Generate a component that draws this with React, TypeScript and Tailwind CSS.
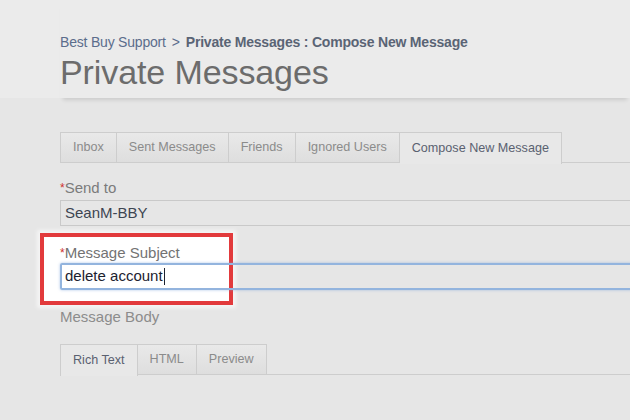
import React from "react";

const font = { fontFamily: '"Liberation Sans", Arial, Helvetica, sans-serif' };

function Tab({ label, active, first }: { label: string; active?: boolean; first?: boolean }) {
  return (
    <div
      className={
        "h-[31px] px-3 flex items-center text-[12.6px] border-t border-r border-[#cdcdcd] " +
        (first ? "border-l " : "") +
        (active
          ? "bg-[#e8e8e8] text-[#5a6170] h-[32px] -mb-px"
          : "bg-gradient-to-b from-[#e9e9e9] to-[#dedede] text-[#8b8b8b] border-b")
      }
    >
      {label}
    </div>
  );
}

export default function App() {
  return (
    <div className="w-[630px] h-[420px] overflow-hidden bg-[#e6e6e6] relative" style={font}>
      {/* header */}
      <div className="bg-[#ebebeb] h-[98px]">
        <div className="ml-[60px] h-[98px] pt-[33px] shadow-[0_5px_4px_-3px_rgba(0,0,0,0.12)] bg-[#ebebeb]">
          <div className="text-[14px] leading-[18px] flex items-center tracking-[-0.2px]">
            <span className="text-[#5b6d8c]">Best Buy Support</span>
            <span className="text-[#5b6d8c] mx-[6px]">&gt;</span>
            <span className="text-[#5a6475] font-bold">Private Messages : Compose New Message</span>
          </div>
          <div className="text-[34px] leading-[40px] text-[#6c6c6c] mt-[1px] tracking-[-0.1px]">
            Private Messages
          </div>
        </div>
      </div>

      {/* tabs */}
      <div className="pl-[60px] mt-[34px] flex items-end">
        <Tab label="Inbox" first />
        <Tab label="Sent Messages" />
        <Tab label="Friends" />
        <Tab label="Ignored Users" />
        <Tab label="Compose New Message" active />
        <div className="flex-1 border-b border-[#cdcdcd]" />
      </div>

      {/* send to */}
      <div className="pl-[60px] mt-[16px]">
        <div className="text-[15px] leading-[18px] text-[#7b7b7b]">
          <span className="text-[#d0312d] text-[12px] align-top">*</span>Send to
        </div>
        <div className="mt-[3px] h-[26px] w-[700px] border border-[#c9c9c9] flex items-center pl-[4px] text-[15px] text-[#3d4552]">
          SeanM-BBY
        </div>
      </div>

      {/* subject */}
      <div className="relative pl-[60px] mt-[7px]">
        <div className="absolute left-[40px] top-0 w-[193px] h-[72px] border-[4px] border-[#e23a3c] bg-white shadow-[0_0_4px_3px_rgba(255,255,255,0.6)]" />
        <div className="relative pt-[11px]">
          <div className="text-[15px] leading-[18px] text-[#737373]">
            <span className="text-[#d0312d] text-[12px] align-top">*</span>Message Subject
          </div>
          <div className="mt-[1px] h-[27px] w-[700px] border-2 border-[#93b4de] rounded-[2px] shadow-[0_0_3px_rgba(120,160,220,0.6)] flex items-center pl-[3px] text-[15px] text-[#1c2230]">
            delete account<span className="inline-block w-px h-[17px] bg-[#1c2230] ml-[1px]" />
          </div>
        </div>
      </div>

      {/* body */}
      <div className="pl-[60px] mt-[18px]">
        <div className="text-[15px] leading-[18px] text-[#8c8c8c]">Message Body</div>
        <div className="mt-[18px] flex items-end">
          <Tab label="Rich Text" active first />
          <Tab label="HTML" />
          <Tab label="Preview" />
          <div className="flex-1 border-b border-[#cdcdcd]" />
        </div>
      </div>
    </div>
  );
}
